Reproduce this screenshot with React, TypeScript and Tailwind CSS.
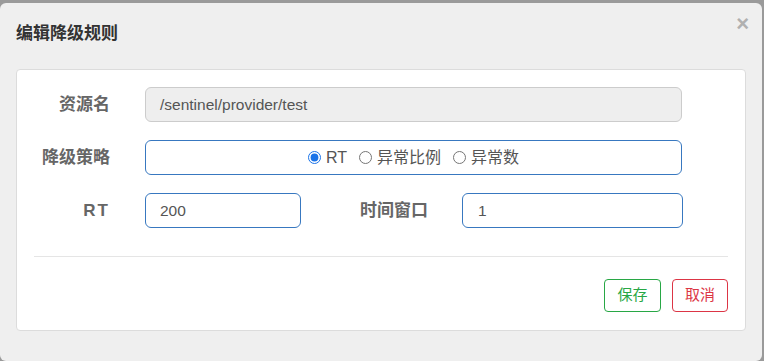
import React from "react";

const cjk = "font-['Liberation_Sans','Noto_Sans_CJK_SC',sans-serif]";

function Label({ children, className = "" }: { children: React.ReactNode; className?: string }) {
  return (
    <label className={`text-right text-[17px] font-bold text-[#666] ${className}`}>{children}</label>
  );
}

export default function App() {
  return (
    <div className={`w-[764px] h-[361px] bg-[#9a9a9a] pt-[3px] pr-[2px] ${cjk}`}>
      <div className="h-[358px] bg-[#efefef] rounded-[6px] flex flex-col">
        {/* Header */}
        <div className="flex items-start justify-between pl-4 pr-[13px] pt-[21px] h-[66px]">
          <h4 className="text-[17px] leading-5 font-bold text-[#333]">编辑降级规则</h4>
          <button className="text-[22px] leading-none font-bold text-[#b0b0b0] -mt-[11px]">×</button>
        </div>

        {/* Body */}
        <div className="ml-4 mr-4 h-[262px] bg-white border border-[#dcdcdc] rounded-[4px] pt-[17px] px-[17px]">
          <div className="flex flex-col gap-[18px]">
            <div className="flex items-center">
              <Label className="w-[76px]">资源名</Label>
              <div className="ml-[35px] w-[537px] h-[35px] flex items-center px-[14px] bg-[#eeeeee] border border-[#cccccc] rounded-[6px] text-[15.5px] text-[#555]">
                /sentinel/provider/test
              </div>
            </div>

            <div className="flex items-center">
              <Label className="w-[76px]">降级策略</Label>
              <div className="ml-[35px] w-[537px] h-[35px] flex items-center justify-center gap-[12px] border border-[#3878c0] rounded-[6px] text-[16px] text-[#555]">
                <label className="flex items-center gap-[5px]">
                  <input type="radio" name="grade" defaultChecked className="w-[13px] h-[13px] m-0 accent-[#1a73e8]" />
                  RT
                </label>
                <label className="flex items-center gap-[5px]">
                  <input type="radio" name="grade" className="w-[13px] h-[13px] m-0" />
                  异常比例
                </label>
                <label className="flex items-center gap-[5px]">
                  <input type="radio" name="grade" className="w-[13px] h-[13px] m-0" />
                  异常数
                </label>
              </div>
            </div>

            <div className="flex items-center">
              <Label className="w-[76px] tracking-[2px]">RT</Label>
              <div className="ml-[35px] w-[156px] h-[35px] flex items-center px-[14px] border border-[#3878c0] rounded-[6px] text-[15.5px] text-[#555]">
                200
              </div>
              <Label className="w-[127px]">时间窗口</Label>
              <div className="ml-[34px] w-[221px] h-[35px] flex items-center px-[15px] border border-[#3878c0] rounded-[6px] text-[15.5px] text-[#555]">
                1
              </div>
            </div>
          </div>

          <div className="mt-[28px] border-t border-[#e5e5e5]" />

          <div className="flex justify-end gap-[11px] mt-[22px]">
            <button className="w-[57px] h-[33px] border border-[#28a745] rounded-[4px] text-[15px] text-[#28a745]">保存</button>
            <button className="w-[56px] h-[33px] border border-[#dc3545] rounded-[4px] text-[15px] text-[#dc3545]">取消</button>
          </div>
        </div>
      </div>
    </div>
  );
}
